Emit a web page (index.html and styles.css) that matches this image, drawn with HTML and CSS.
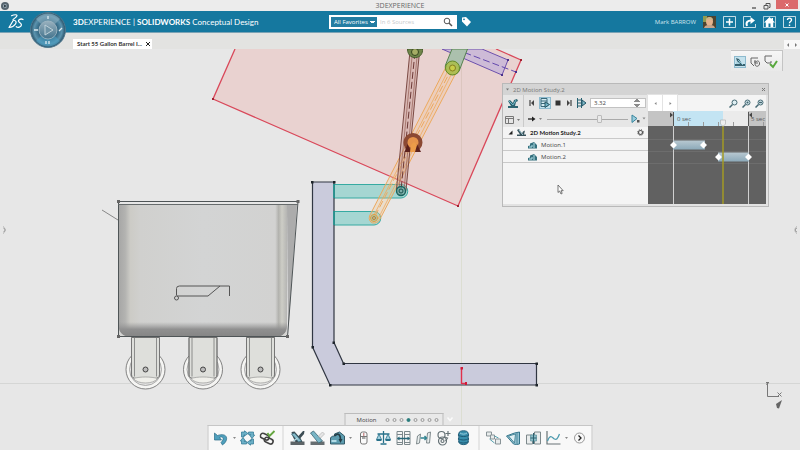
FILE: index.html
```html
<!DOCTYPE html>
<html lang="en">
<head>
    <meta charset="UTF-8">
    <meta name="viewport" content="width=device-width, initial-scale=1.0">
    <title>3DEXPERIENCE</title>
    <link rel="stylesheet" href="styles.css">
</head>
<body>
    <div class="titlebar">
        <svg class="app-icon" width="8" height="8" viewBox="0 0 8 8"><circle cx="4" cy="4" r="4" fill="#56646e"/><circle cx="4" cy="4" r="2" fill="#9fb0ba"/><path d="M3 2.5l3 1.5-3 1.5z" fill="#33414b"/></svg>
        <span class="window-title">3DEXPERIENCE</span>
        <div class="window-buttons">
            <button aria-label="Minimize"><svg width="8" height="8" viewBox="0 0 8 8"><path d="M2 6h4" stroke="#444" stroke-width="1.2"/></svg></button>
            <button aria-label="Restore"><svg width="8" height="8" viewBox="0 0 8 8"><path d="M3 3V1.500h4v4H6M1 3.500h4v3.500H1z" fill="none" stroke="#555"/></svg></button>
            <button class="close" aria-label="Close"><svg width="8" height="8" viewBox="0 0 8 8"><path d="M2.500 2.500l3 3m0-3l-3 3" stroke="#fff"/></svg></button>
        </div>
    </div>

    <header class="header">
        <svg class="ds-logo" width="16" height="17" viewBox="0 0 16 17" fill="none" stroke="#fff" stroke-linecap="round" stroke-linejoin="round">
            <path d="M3.500 2.800C6 1.500 9.500 1.200 9 2.800 8.500 4.200 6.500 5.500 5 6.500" stroke-width="1.100"/>
            <path d="M1 14.500L5.500 7C8 7.500 8.800 9 7.500 11 6 13.200 3.500 14.300 1 14.500z" stroke-width="1.200"/>
            <path d="M15 6.500C12.800 5.300 10 6.600 10.500 8.300 11 9.800 13.700 10 13.400 12 13 14.200 10 15 8.300 13.700" stroke-width="1.300"/>
        </svg>
        <button class="compass" aria-label="Compass">
            <svg width="36" height="36" viewBox="0 0 36 36">
                <defs>
                    <radialGradient id="rim"><stop offset=".5" stop-color="#2c5f7b"/><stop offset=".8" stop-color="#5b93ae"/><stop offset="1" stop-color="#274f66"/></radialGradient>
                    <linearGradient id="hub" x2="0" y2="1"><stop offset="0" stop-color="#9ab1be"/><stop offset="1" stop-color="#42738d"/></linearGradient>
                </defs>
                <circle cx="18" cy="18" r="17.500" fill="url(#rim)" stroke="#50798f"/>
                <path d="M6 7a16 16 0 0 1 24 0l-5 5a10 10 0 0 0-14 0z" fill="#8dafc0" opacity=".6"/>
                <path d="M6 29a16 16 0 0 0 24 0l-5-5a10 10 0 0 1-14 0z" fill="#4da2c6" opacity=".55"/>
                <circle cx="18" cy="18" r="9" fill="url(#hub)" stroke="#a6bdc8" stroke-width=".8"/>
                <path d="M15 13l8 5-8 5z" fill="#6e93a6" stroke="#bfd1d9"/>
                <path d="M4 18h4M29 19l3-3M18 4v3M16 29v3m3-3v3" stroke="#dceaf0" stroke-width="1.300"/>
            </svg>
        </button>
        <h1 class="brand"><b>3D</b>EXPERIENCE | <b>SOLIDWORKS</b> <span>Conceptual Design</span></h1>

        <form class="search">
            <select aria-label="Search scope"><option>All Favorites</option></select>
            <input type="text" aria-label="Search" placeholder="In 6 Sources">
            <button type="button" aria-label="Search"><svg width="10" height="10" viewBox="0 0 10 10" fill="none" stroke="#555"><circle cx="4" cy="4" r="2.800"/><path d="M6 6l3 3" stroke-width="1.500"/></svg></button>
        </form>
        <button class="tag" aria-label="Tags"><svg width="11" height="11" viewBox="0 0 11 11"><path d="M1 1.500L5 1l5 5-4 4.500-5-5z" fill="#fff"/><circle cx="3" cy="3.300" r=".9" fill="#16799f"/></svg></button>

        <div class="user">
            <span>Mark BARROW</span>
            <svg class="avatar" width="13" height="12" viewBox="0 0 13 12"><path fill="#4d4430" d="M0 0h13v12H0z"/><path fill="#8f9b51" d="M0 0h4v6H0z"/><ellipse cx="6.500" cy="5.500" rx="3.500" ry="4.200" fill="#e3b38e"/><path d="M3 4c0-4 7-4 7 0-2-1-5-1-7 0z" fill="#c9b585"/><path d="M1 12c1-3 3-3 5.500-3s4.500 0 5.500 3z" fill="#c9a58c"/></svg>
            <button aria-label="Add"><svg width="13" height="12" viewBox="0 0 13 12" fill="none" stroke="#fff"><path d="M.5.5h12v11H.5z" opacity=".75"/><path d="M6.500 2.500v7M3 6h7" stroke-width="1.500"/></svg></button>
            <button aria-label="Share"><svg width="13" height="12" viewBox="0 0 13 12" fill="none" stroke="#fff"><path d="M8 .5H.5v11h12V8" opacity=".75"/><path d="M4 10C2.500 6 5 4.500 8 4.500" stroke-width="2"/><path d="M7.500 1l4.500 3.500-4.500 3.500z" fill="#fff" stroke="none"/></svg></button>
            <button aria-label="Home"><svg width="13" height="12" viewBox="0 0 13 12"><path d="M.5.5h12v11H.5z" fill="none" stroke="#fff" opacity=".65"/><path d="M6.500 1L1 6.500h1.800V11h2.700V7.500h2V11h2.700V6.500H12L10 4.500V2H8.500v1z" fill="#fff"/></svg></button>
            <button aria-label="Help"><svg width="13" height="12" viewBox="0 0 13 12" fill="none" stroke="#fff"><path d="M.5.5h12v11H.5z" opacity=".75"/><path d="M4.500 4c0-2.500 4-2.500 4 0 0 1.500-2 1.500-2 3.200M6.500 8.500V10" stroke-width="1.400"/></svg></button>
        </div>
    </header>

    <nav class="tabs">
        <div class="tab">
            <span>Start 55 Gallon Barrel I...</span>
            <button aria-label="Close tab"><svg width="6" height="6" viewBox="0 0 6 6"><path d="M1 1l4 4m0-4L1 5" stroke="#222"/></svg></button>
        </div>
        <div class="tab-scroll">
            <button aria-label="Previous tab"><svg width="6" height="6" viewBox="0 0 6 6"><path d="M4 1L2 3l2 2z" fill="#777"/></svg></button>
            <button aria-label="Next tab"><svg width="6" height="6" viewBox="0 0 6 6"><path d="M2 1l2 2-2 2z" fill="#777"/></svg></button>
        </div>
    </nav>

    <main class="stage">
        <svg class="drawing" viewBox="0 49 800 401" preserveAspectRatio="xMidYMin slice">
            <defs>
                <linearGradient id="cart"><stop offset="0" stop-color="#a6a6a5"/><stop offset=".04" stop-color="#b3b3b1"/><stop offset=".07" stop-color="#cccbc6"/><stop offset=".13" stop-color="#d0d0ce"/><stop offset=".5" stop-color="#d3d4d4"/><stop offset=".93" stop-color="#d2d2d1"/><stop offset=".95" stop-color="#b2b2ae"/><stop offset=".97" stop-color="#cdcdc6"/><stop offset="1" stop-color="#b5b5b3"/></linearGradient>
                <linearGradient id="cartFloor" x2="0" y2="1"><stop offset="0" stop-color="#999" stop-opacity="0"/><stop offset=".5" stop-color="#909090"/><stop offset="1" stop-color="#858585"/></linearGradient>
                <g id="caster">
                    <circle r="19.500" fill="#f5f5f3" stroke="#666" stroke-width=".8"/>
                    <circle r="16" fill="#e4e4e3" stroke="#999" stroke-width=".8"/>
                    <path d="M-14-32V5c0 3 2 4 5 4H9c3 0 5-1 5-4v-37z" fill="#dedfdb" stroke="#555" stroke-width=".8"/>
                    <path d="M-14-32v39M-11-32v39M11-32v39M14-32v39" stroke="#777" stroke-width=".8"/>
                    <path d="M-12 9c6-2 18-2 24 0-4 6-20 6-24 0z" fill="#f0f0eb" stroke="#888" stroke-width=".6"/>
                    <circle r="2.500" fill="#bbb" stroke="#444"/>
                </g>
            </defs>

            <!-- ground and centre lines -->
            <path d="M0 383.500h800" stroke="#d5d6d5"/>
            <path d="M461.500 49v401" stroke="#dcded2"/>

            <!-- cart -->
            <path d="M102 210l16 10" stroke="#888"/>
            <path d="M287 205h10l-9 130" fill="#acacac"/>
            <path d="M118.500 204H287v132.500H118.500z" fill="url(#cart)"/>
            <path d="M119 322h168v9l-6 5.500H125l-6-5.500z" fill="url(#cartFloor)"/>
            <path d="M118.500 326v10.500H129c-6 0-10-4-10.500-10.500zM287 326v10.500h-8c5-1 8-5 8-10.500z" fill="#d5d5d3"/>
            <path d="M118.500 201.500H298l-10.500 135h-169z" fill="none" stroke="#4f5557"/>
            <path d="M118 204.500h180" stroke="#666b6c"/>
            <path d="M117 200h3v3h-3zM296.500 200h3v3h-3zM117 335h3v3h-3zM286 335h3v3h-3z" fill="#666"/>
            <g fill="none" stroke="#555">
                <path d="M176.500 295.500v-7q0-2.500 3-2.500h50v10M177 296h31l12-10"/>
                <circle cx="176.500" cy="298" r="2"/>
            </g>
            <use href="#caster" x="145.500" y="369.500"/>
            <use href="#caster" x="203" y="369.500"/>
            <use href="#caster" x="260.500" y="369.500"/>

            <!-- barrel -->
            <path d="M235 49l-22 50 245 107 63-146-25-11z" fill="#e9d2d0"/>
            <path d="M461.500 49v150" stroke="#dcc6bf"/>
            <path d="M235 49l-22 50 245 107 63-146-25-11" fill="none" stroke="#d9485a" stroke-width="1.300"/>
            <path d="M212 98h2v2h-2zM457 205h2v2h-2zM520 59h2v2h-2z" fill="#a02030"/>

            <!-- lift arm mounts -->
            <g fill="#a5d6d2" stroke="#36aaa2">
                <path d="M334 184.500h67a6.500 6.500 0 0 1 0 13.500h-67z"/>
                <path d="M334 211.500h40a6.500 6.500 0 0 1 0 13.500h-40z"/>
            </g>
            <!-- frame -->
            <path d="M312.500 182H334v160.500l9.500 21h193V385H330l-17.500-38z" fill="#cacbdc" stroke="#303642" stroke-width="1.200"/>
            <g fill="#1e252b"><path d="M311 181h2.500v2.500H311zM333 181h2.500v2.500H333zM332.500 341.500H335v2.500h-2.500zM342.500 362.500h2.500v2.500h-2.500zM535.500 362.500h2.500v2.500h-2.500zM535.500 384h2.500v2.500h-2.500zM329 384h2.500v2.500H329zM311.500 346h2.500v2.500h-2.500z"/></g>
            <path d="M334 184v14M334 211v14" stroke="#1f9d97" stroke-width="1.500"/>

            <!-- top bracket -->
            <path d="M442 49l60 26 6-15-26-11z" fill="#cdbbd7" stroke="#6c50ad"/>
            <path d="M455 49l61 23" fill="none" stroke="#6348ad" stroke-dasharray="7 3"/>
            <path d="M501 74h2v2h-2zM507 59h2v2h-2zM515 71h2v2h-2z" fill="#49318c"/>
            <path d="M452 49l-6.500 16c-2 10 11 13 14 5L467.500 49z" fill="#abc0ad" stroke="#55834d"/>
            <!-- orange arm -->
            <g fill="none" stroke="#eda95e">
                <path d="M446.500 66l-77 150c-2 8 7 9 10 4l78-150" fill="#f4c58a" fill-opacity=".28"/>
                <path d="M450 67l-77 150M454 69l-76 150" stroke-width=".8"/>
                <path d="M452 68l-78 150" stroke-dasharray="7 3"/>
            </g>
            <circle cx="452.500" cy="68" r="7" fill="#a9bd48" fill-opacity=".85" stroke="#638a28"/>
            <circle cx="452.500" cy="68" r="3" fill="#c8cd46" stroke="#857f22"/>
            <circle cx="374" cy="218" r="3.500" fill="#a2ccab" stroke="#ea9a38"/>
            <circle cx="374" cy="218" r="1.500" fill="none" stroke="#c6772f"/>
            <!-- brown arm -->
            <path d="M410 51l-13.500 138c0 8 9 8 9.500 1L419.500 52z" fill="#bd8980" fill-opacity=".35" stroke="#7b4a44"/>
            <path d="M412.500 52L399 190M417.500 52L404 190" stroke="#935e55" stroke-width=".7"/>
            <path d="M415 52l-14 138" stroke="#6d3936" stroke-dasharray="7 3"/>
            <path d="M407.500 49h15c1 11-15 12-15 0z" fill="#71864a" stroke="#465c2c"/>
            <circle cx="415" cy="52" r="3.500" fill="#a5ad65" stroke="#34451e"/>
            <circle cx="401" cy="191" r="4.500" fill="#5ba8a3" fill-opacity=".6" stroke="#16655f" stroke-width="1.300"/>
            <circle cx="401" cy="191" r="2" fill="none" stroke="#18504c"/>
            <!-- motor -->
            <circle cx="413" cy="142.500" r="7.500" fill="#e6944b" stroke="#8b4933" stroke-width="4"/>
            <path d="M404.500 152l3-8 4 8zM414 152l3-8 4 8z" fill="#5c211c"/>
            <path d="M410 152l1-7 3-3 3 3-2 7z" fill="#ec9c49"/>

            <!-- origin -->
            <path d="M461.500 384v-15.500M461.500 383.500h5" stroke="#e0314b" stroke-width="1.400"/>
            <path d="M460.500 367h2.500v2.500h-2.500zM465 382h2v3h-2z" fill="#d11a38"/>

            <!-- view axes -->
            <g fill="none" stroke="#777">
                <path d="M767.500 384v12.500H779M766 382.500h3l-3 2M777.500 392.500l4 4m0-4l-4 4"/>
            </g>
            <path d="M782 400l-6 4 1 4 2 .5z" fill="#666"/>

            <g fill="none" stroke="#999" stroke-width=".8">
                <path d="M3 226.500a4 4 0 0 1 0 7M3.500 228l2 2-2 2M797 226.500a4 4 0 0 0 0 7M797 228l-2 2 2 2"/>
            </g>
        </svg>

        <div class="sketch-tools">
            <button class="selected" aria-label="Motion"><svg width="12" height="12" viewBox="0 0 12 12"><path d="M1 10h10V8H8L5 3 2 2l1 3 3 3H1z" fill="#37616f"/><path d="M4 4l5 5M2 7h4" stroke="#8ec4d4"/></svg></button>
            <button aria-label="Update sketch"><svg width="12" height="12" viewBox="0 0 12 12" fill="none" stroke="#666"><path d="M2 2h7M2 2v5l3 3M6 5v3c0 3 4 3 4.500 0S8 4 7 6M6 4v3h3"/></svg></button>
            <button aria-label="Accept"><svg width="14" height="14" viewBox="0 0 14 14" fill="none"><path d="M8 1H1v5l2 2h4V6" stroke="#666"/><path d="M6 9l3 3 4-6" stroke="#58a83d" stroke-width="2"/></svg></button>
        </div>

        <section class="panel">
            <div class="panel-title">
                <svg width="5" height="5" viewBox="0 0 5 5"><path d="M1 1.500h3l-1.500 2z" fill="#777"/></svg>
                <h2>2D Motion Study.2</h2>
                <button aria-label="Close panel"><svg width="5" height="5" viewBox="0 0 5 5"><path d="M1 1l3 3m0-3L1 4" stroke="#777"/></svg></button>
            </div>
            <div class="panel-body">
                <div class="study">
                    <div class="controls">
                        <div class="modes">
                            <button aria-label="Motion study"><svg width="12" height="12" viewBox="0 0 12 12"><path d="M1 10h10V8H8l1-4 2-1-1-2-3 1-1 3-3-3-2 1 3 5H1z" fill="#2c6471"/><path d="M2 3l4 4 3-5" fill="none" stroke="#71b6c6"/></svg></button>
                            <button class="drop" aria-label="Layout"><svg width="16" height="9" viewBox="0 0 16 9"><path d="M.5 1.500h8v7h-8zM.5 3.500h8M3.500 3.500v5" fill="none" stroke="#777"/><path d="M12 4h3l-1.500 2z" fill="#777"/></svg></button>
                        </div>
                        <div class="playback">
                            <div class="play-row">
                                <button aria-label="To start"><svg width="8" height="8" viewBox="0 0 8 8"><path d="M2 1v6" stroke="#222"/><path d="M6 1v6L3 4z" fill="#444"/></svg></button>
                                <button class="selected" aria-label="Simulate"><svg width="12" height="12" viewBox="0 0 12 12"><path d="M2 1.500h6v8H2zM2 4h6M2 6.500h4" fill="#d4eaf1" stroke="#39697a"/><path d="M6 5l4.500 2.500L6 10.500z" fill="#74b7cc" stroke="#285663"/></svg></button>
                                <button aria-label="Stop"><svg width="8" height="8" viewBox="0 0 8 8"><path d="M1.500 1.500h5v5h-5z" fill="#333"/></svg></button>
                                <button aria-label="To end"><svg width="8" height="8" viewBox="0 0 8 8"><path d="M6 1v6" stroke="#222"/><path d="M2 1v6l3-3z" fill="#444"/></svg></button>
                                <button aria-label="Step"><svg width="11" height="10" viewBox="0 0 11 10"><path d="M1.500 0v10M5.500 0v10M1 2h5M1 5h5M1 8h5" stroke="#286272"/><path d="M6 2l4 3-4 3z" fill="#7db9c8" stroke="#245566"/></svg></button>
                                <input type="number" aria-label="Time" value="3.32" step="0.01">
                            </div>
                            <div class="play-row">
                                <button class="drop" aria-label="Direction"><svg width="16" height="8" viewBox="0 0 16 8"><path d="M0 4h5" stroke="#222" stroke-width="1.300"/><path d="M4 1.500L7.500 4 4 6.500z" fill="#222"/><path d="M11 3h3l-1.500 2z" fill="#888"/></svg></button>
                                <input type="range" aria-label="Speed" min="0" max="100" value="66">
                                <button class="drop" aria-label="Play options"><svg width="15" height="10" viewBox="0 0 15 10"><path d="M1 1l5 3.500-5 4z" fill="#9dcddd" stroke="#36859d"/><path d="M6 6h2.500v2.500H6z" fill="#555"/><path d="M11.500 3.500h3L13 5.500z" fill="#888"/></svg></button>
                            </div>
                        </div>
                    </div>
                    <ul class="tree">
                        <li class="root">
                            <svg width="5" height="5" viewBox="0 0 5 5"><path d="M4.500.5v4h-4z" fill="#222"/></svg>
                            <svg width="9" height="9" viewBox="0 0 9 9"><path d="M0 8h9V6.500H7l1-4-2 1-1 2L2 1 0 2l3 4.500H0z" fill="#37525b"/><path d="M2 2l4 5" stroke="#a8ced8"/></svg>
                            <span>2D Motion Study.2</span>
                            <button aria-label="Study settings"><svg width="7" height="7" viewBox="0 0 7 7" fill="none" stroke="#555"><circle cx="3.500" cy="3.500" r="2" stroke-width="1.200"/><circle cx="3.500" cy="3.500" r="2.900" stroke-dasharray="1 1.300"/></svg></button>
                        </li>
                        <li><svg width="9" height="8" viewBox="0 0 9 8"><path d="M0 7.500h9V4L6 1 2 2.500v2L0 5z" fill="#35707e"/><path d="M1 6h3V4M6 2v5" stroke="#b3e0e8" fill="none"/></svg><span>Motion.1</span></li>
                        <li><svg width="9" height="8" viewBox="0 0 9 8"><path d="M0 7.500h9V4L6 1 2 2.500v2L0 5z" fill="#35707e"/><path d="M1 6h3V4M6 2v5" stroke="#b3e0e8" fill="none"/></svg><span>Motion.2</span></li>
                    </ul>
                </div>
                <div class="timeline">
                    <div class="timeline-tools">
                        <div class="steps">
                            <button aria-label="Previous key"><svg width="5" height="5" viewBox="0 0 5 5"><path d="M3.500 1v3L1.500 2.500z" fill="#888"/></svg></button>
                            <button aria-label="Next key"><svg width="5" height="5" viewBox="0 0 5 5"><path d="M1.500 1v3l2-1.500z" fill="#888"/></svg></button>
                        </div>
                        <button aria-label="Zoom fit"><svg width="9" height="9" viewBox="0 0 9 9" fill="none" stroke="#456873"><circle cx="5.500" cy="3.500" r="2.500" fill="#dfeff3"/><path d="M3.500 5.500l-3 3" stroke-width="1.500"/></svg></button>
                        <button aria-label="Zoom in"><svg width="9" height="9" viewBox="0 0 9 9" fill="none" stroke="#456873"><circle cx="5.500" cy="3.500" r="2.500" fill="#dfeff3"/><path d="M3.500 5.500l-3 3M4.500 3.500h2M5.500 2.500v2" stroke-width="1.500"/></svg></button>
                        <button aria-label="Zoom out"><svg width="9" height="9" viewBox="0 0 9 9" fill="none" stroke="#456873"><circle cx="5.500" cy="3.500" r="2.500" fill="#dfeff3"/><path d="M3.500 5.500l-3 3M4 3.500h3" stroke-width="1.500"/></svg></button>
                    </div>
                    <svg class="tracks" viewBox="0 0 118 93">
                        <defs><linearGradient id="bar" x2="0" y2="1"><stop offset="0" stop-color="#b8c8d1"/><stop offset="1" stop-color="#8ca9b9"/></linearGradient></defs>
                        <path fill="#c4c4c4" d="M0 0h118v16H0z"/>
                        <path fill="#c3e4f3" d="M25 0h50v16H25z"/>
                        <path fill="#ebebeb" d="M75 0h25v16H75z"/>
                        <path fill="#616161" d="M0 15h118v78H0z"/>
                        <path d="M0 28.500h118M0 40.500h118M0 52.500h118" stroke="#6d6d6d"/>
                        <path d="M40.500 11v4M55.500 11v4M70.500 11v4M85.500 11v4M115.500 11v4" stroke="#999"/>
                        <path d="M25.500 1v14M100.500 1v14" stroke="#555"/>
                        <path d="M22 1.500v5l3-2.500zM104 1.500v5l-3-2.500z" fill="#444"/>
                        <text class="tick-label" x="29" y="10">0 sec</text>
                        <text class="tick-label" x="103" y="10">5 sec</text>
                        <path d="M25.500 15v78M100.500 15v78" stroke="#d0d0d0"/>
                        <rect x="25" y="29.500" width="32" height="9" fill="url(#bar)"/>
                        <rect x="70" y="41.500" width="31" height="9" fill="url(#bar)"/>
                        <path d="M75 14v79" stroke="#a39a24" stroke-width="1.500"/>
                        <path d="M72.500 9h5v4L75 15.500 72.500 13z" fill="#eee" stroke="#aaa" stroke-width=".6"/>
                        <path d="M25.500 30.500l3.500 3.500-3.500 3.500L22 34zM55.500 30.500L59 34l-3.500 3.500L52 34zM70.500 42.500L74 46l-3.500 3.500L67 46zM100.500 42.500L104 46l-3.500 3.500L97 46z" fill="#fff"/>
                    </svg>
                </div>
            </div>
        </section>

        <svg class="cursor" width="7" height="11" viewBox="0 0 7 11"><path d="M1 1v7.500l1.600-1.500 1.400 3 1.200-.6L4 6.700h2.200z" fill="#fff" stroke="#555" stroke-width=".8"/></svg>

        <div class="dock">
            <div class="dock-head">
                <div class="dock-tab">
                    <span>Motion</span>
                    <div class="dots"><i></i><i></i><i></i><i class="on"></i><i></i><i></i><i></i><i></i></div>
                </div>
                <svg width="9" height="8" viewBox="0 0 9 8"><path d="M2 2.500l2.500 3L7 2.500" fill="none" stroke="#fafafa" stroke-width="1.500"/></svg>
            </div>
            <div class="dock-bar">
                <button aria-label="Undo"><svg viewBox="0 0 16 16"><path d="M1 3v7h7L6 7.500c4-2 5 2 1.500 5L9 15c7-5 5-13-5-9.500z" fill="#4fa0bd" stroke="#2a6b86" stroke-width=".7"/></svg></button>
                <button class="more" aria-label="Undo history"><svg viewBox="0 0 4 4"><path d="M.5 1h3L2 3z" fill="#888"/></svg></button>
                <button aria-label="Update"><svg viewBox="0 0 16 16" fill="#6bb0c7" stroke="#2d7490" stroke-width=".7"><path d="M2 7V2h3V.8L8.500 3.500 5 6V4.800H4.500V7zM9 2h5v3h1.200l-2.700 3.500L10 5h1.200v-.5H9zM14 9v5h-3v1.200L7.500 12.500 11 10v1.200h.5V9zM7 14H2v-3H.8l2.700-3.500L6 11H4.800v.5H7z"/></svg></button>
                <button aria-label="Link"><svg viewBox="0 0 16 16" fill="none" stroke="#444" stroke-width="1.600"><rect x="1" y="4" width="9" height="5" rx="2.500" transform="rotate(25 5 6)"/><rect x="5" y="8" width="9" height="5" rx="2.500" transform="rotate(25 9 10)"/><path d="M8 3l2 3 5-5" stroke="#65a640" stroke-width="1.800"/></svg></button>
                <span class="sep"></span>
                <button aria-label="Mechanism"><svg viewBox="0 0 16 16"><path d="M1 11.500h14V15H1z" fill="#5c6366"/><path d="M2 2l3-.5 4 4.500 4.500-5H15l-.5 3L11 8l2 4H6L3 6z" fill="#3c4c53"/><path d="M2 4l3-1 7 8-3 1z" fill="#86bccb" stroke="#39606e" stroke-width=".7"/><path d="M4 11l4-3" stroke="#b7d9e2" stroke-width="1.500"/></svg></button>
                <button aria-label="Driver"><svg viewBox="0 0 16 16"><path d="M1 11.500h14V15H1z" fill="#666d70"/><path d="M1 3l3-2 9 10-4 2z" fill="#79b5c6" stroke="#3c6775" stroke-width=".8"/><path d="M9 6l4-4 2 2-4 4z" fill="#e5e5e5" stroke="#bbb" stroke-width=".8"/></svg></button>
                <button aria-label="Motion"><svg viewBox="0 0 16 16"><path d="M1 8c1-2 3-2 4-2V4l5-2 5 4v8H1z" fill="#5c9caf" stroke="#345a68"/><path d="M5 6c4-4 6-1 6 4" fill="none" stroke="#243c45" stroke-width="1.600"/><path d="M9 9l2 4 2-4z" fill="#243c45"/><path d="M2 11h5" stroke="#b2dce7" stroke-width="2"/></svg></button>
                <button class="more" aria-label="More motions"><svg viewBox="0 0 4 4"><path d="M.5 1h3L2 3z" fill="#888"/></svg></button>
                <button aria-label="Mouse"><svg viewBox="0 0 16 16" fill="#fafafa" stroke="#777"><rect x="5" y="2" width="6.500" height="12" rx="2"/><path d="M5 6.500h6.500"/><path d="M6.500 8h3.500" stroke="#555"/><path d="M8.300 3v3" stroke="#b66"/></svg></button>
                <button aria-label="Balance"><svg viewBox="0 0 16 16" fill="none" stroke="#28718a" stroke-width="1.300"><path d="M8 1v12M2 4h12M5 14h6"/><path d="M3.500 4L1 9.500h5zM12.500 4L10 9.500h5z" fill="#a5d1df" stroke-width=".8"/><path d="M1 10h5M10 10h5" stroke-width="2"/></svg></button>
                <button aria-label="Distance"><svg viewBox="0 0 16 16" fill="#f6f6f6" stroke="#7c888c"><path d="M1.500 1.500h5.500v13H1.500zM9 1.500h5.500v13H9zM1.500 4.500H7M9 4.500h5.500M1.500 12.500H7M9 12.500h5.500"/><path d="M2 8.500h12" stroke="#286779" stroke-width="1.300"/><path d="M4 6.500v4L1.500 8.500zM12 6.500v4l2.500-2z" fill="#286779" stroke="none"/></svg></button>
                <button aria-label="Spring"><svg viewBox="0 0 16 16" fill="#e8eeee" stroke="#7f898c"><path d="M1 14l1-8 3-2-1 9zM11 13l1-10 3-1-1 11z"/><path d="M5 8h6M9 6l2 2-2 2" stroke="#318491" fill="none" stroke-width="1.400"/></svg></button>
                <button aria-label="Belt"><svg viewBox="0 0 16 16" fill="none" stroke="#677377" stroke-width="1.200"><circle cx="6" cy="5" r="3.500"/><circle cx="7" cy="11" r="4"/><circle cx="7" cy="11" r="1.500"/><path d="M9 7l3 1-2 3M12.500 1v5M10 3.500h5"/></svg></button>
                <button aria-label="Barrel"><svg viewBox="0 0 16 16"><path d="M3.500 3c0-3 9-3 9 0l.7 2-.7 2 .7 2-.7 2 .3 1c-1 3.500-8.600 3.500-9.600 0l.3-1-.7-2 .7-2-.7-2z" fill="#398eac" stroke="#28617b"/><path d="M3 5c2 2 8 2 10 0M3 8.500c2 2 8 2 10 0M3 11.500c2 2 8 2 10 0" fill="none" stroke="#1d5974"/><path d="M4.500 3c2 1.500 5 1.500 7 0" stroke="#9acddd" fill="none"/></svg></button>
                <span class="sep"></span>
                <button aria-label="Pattern"><svg viewBox="0 0 16 16" fill="#e8ecec" stroke="#899397"><path d="M1 2h5v4H1zM10 9h5v5h-5z"/><path d="M5 5h4v4H5z"/><path d="M4 9l5 4M9 6l4 2" stroke="#57a2b0"/></svg></button>
                <button aria-label="Section"><svg viewBox="0 0 16 16"><path d="M1 6l8-3 5-1v12l-3 .5L8 14z" fill="#95c3d3" stroke="#33748a"/><path d="M3 6l7-2-1 9zM11.500 3v11" fill="#e1f0f4" stroke="#4d899b"/></svg></button>
                <button aria-label="Interference"><svg viewBox="0 0 16 16"><path d="M1 5h6v9H1zM9 2h6v12H9z" fill="#eaeded" stroke="#7d888b"/><path d="M5 5h6v6H5z" fill="#8dbcc7" stroke="#5b929e" stroke-width=".7"/><path d="M8 3v11M5 8h6" stroke="#2d6270"/></svg></button>
                <button aria-label="Plot"><svg viewBox="0 0 16 16" fill="none"><path d="M1.500 1v13H15" stroke="#687376" stroke-width="1.200"/><path d="M2 11c3-8 5-3 7-2s3 0 5-5" stroke="#4d9baf" stroke-width="1.300"/></svg></button>
                <button class="more" aria-label="More plots"><svg viewBox="0 0 4 4"><path d="M.5 1h3L2 3z" fill="#888"/></svg></button>
                <button aria-label="Next commands"><svg viewBox="0 0 16 16" fill="none"><circle cx="8" cy="8" r="5" stroke="#999"/><path d="M7 5.500L9.500 8 7 10.500" stroke="#222" stroke-width="1.300"/></svg></button>
            </div>
        </div>
    </main>
</body>
</html>
```
FILE: styles.css
```css
* {
    box-sizing: border-box;
}
body {
    margin: 0;
    height: 100vh;
    display: flex;
    flex-direction: column;
    overflow: hidden;
    background: #e7e7e7;
    color: #444;
    font: 6px/8px "Open Sans", "Noto Sans", sans-serif;
}
button {
    display: flex;
    align-items: center;
    justify-content: center;
    flex-shrink: 0;
    padding: 0;
    border: 0;
    background: none;
    cursor: pointer;
}
input, select {
    min-width: 0;
    margin: 0;
    padding: 0;
    border: 0;
    font: inherit;
    color: inherit;
}
svg {
    display: block;
    flex-shrink: 0;
}
h1, h2 {
    margin: 0;
    font-weight: normal;
}

/* window title */
.titlebar {
    display: grid;
    grid-template-columns: 1fr auto 1fr;
    align-items: center;
    height: 11px;
    background: #ececec;
}
.app-icon {
    margin-left: 1px;
}
.window-title {
    font-size: 7px;
    line-height: 10px;
    color: #666;
}
.window-buttons {
    display: flex;
    justify-content: flex-end;
    gap: 5px;
    height: 100%;
    padding-right: 2px;
}
.window-buttons .close {
    width: 22px;
    height: 9px;
    background: #db6a6c;
}

/* blue header */
.header {
    position: relative;
    display: flex;
    align-items: center;
    flex-shrink: 0;
    height: 22px;
    padding: 0 4px 0 8px;
    background: #15789f;
    border-bottom: 1px solid #7ba3b5;
    color: #fff;
}
.compass {
    position: absolute;
    left: 30px;
    top: 1px;
    z-index: 2;
}
.brand {
    width: 256px;
    padding-left: 49px;
    font-family: Lato, sans-serif;
    font-size: 8px;
    line-height: 12px;
    white-space: nowrap;
}
.search {
    display: flex;
    align-items: center;
    width: 128px;
    height: 14px;
    margin-left: 49px;
    padding: 2px;
    background: #fff;
}
.search select {
    appearance: none;
    width: 46px;
    height: 10px;
    padding-left: 3px;
    border-radius: 0;
    background: linear-gradient(to bottom left, #fff 50%, transparent 50%) right 5px top 4px / 3px 3px no-repeat,
        linear-gradient(to bottom right, #fff 50%, transparent 50%) right 2px top 4px / 3px 3px no-repeat #247da2;
    color: #fff;
}
.search input {
    flex: 1;
    padding-left: 3px;
    background: none;
    color: #444;
}
.search input::placeholder {
    color: #c5c9cb;
}
.search button {
    width: 14px;
}
.tag {
    margin-left: 4px;
}
.user {
    display: flex;
    align-items: center;
    gap: 7px;
    margin-left: auto;
}
.user span {
    color: #cfe4ed;
}

/* document tabs */
.tabs {
    display: flex;
    align-items: flex-end;
    justify-content: space-between;
    height: 16px;
    padding-left: 73px;
    background: #e3e3e1;
}
.tab {
    display: flex;
    align-items: center;
    justify-content: space-between;
    width: 79px;
    height: 10px;
    padding: 0 1px 0 4px;
    background: #fff;
    color: #333;
    font-family: Lato, sans-serif;
    font-weight: bold;
}
.tab-scroll {
    display: flex;
    gap: 2px;
    height: 9px;
    padding: 0 1px;
    background: #f8f8f8;
}

/* sketch area */
.stage {
    position: relative;
    flex: 1;
    min-height: 0;
}
.drawing {
    width: 100%;
    height: 100%;
}
.sketch-tools {
    position: absolute;
    top: 1px;
    right: 17px;
    display: flex;
    align-items: center;
    gap: 3px;
    height: 21px;
    padding: 2px 4px 0 3px;
    border-top: 1px solid #c4c4c4;
    border-right: 1px solid #c4c4c4;
    background: linear-gradient(#f6f6f6, #e9e9e9);
}
.selected {
    background: #c5e2ed;
    outline: 1px solid #8dbace;
    outline-offset: -1px;
}

/* motion study window */
.panel {
    position: absolute;
    top: 34px;
    right: 31px;
    width: 267px;
    border: 1px solid #b9b9b9;
    background: #e2e2e2;
}
.panel-title {
    display: flex;
    align-items: center;
    gap: 3px;
    height: 11px;
    padding: 0 2px;
    background: #d4d4d4;
    color: #777;
}
.panel-title h2 {
    flex: 1;
    font-size: 6px;
}
.panel-body {
    display: flex;
    padding: 0 2px 2px 0;
}
.study {
    flex: 1;
    min-width: 0;
    display: flex;
    flex-direction: column;
}
.controls {
    display: flex;
    height: 32px;
    background: #e6e6e6;
}
.modes {
    display: flex;
    flex-direction: column;
    justify-content: space-around;
    align-items: center;
    width: 21px;
    border-right: 1px solid #cacaca;
}
.playback {
    flex: 1;
    min-width: 0;
    display: flex;
    flex-direction: column;
}
.play-row {
    display: flex;
    align-items: center;
    gap: 3px;
    height: 16px;
    padding: 0 2px 0 4px;
}
.play-row input[type=number] {
    flex: 1;
    width: 0;
    height: 10px;
    padding-left: 3px;
    border: 1px solid #c2c2c2;
    background: #fff;
}
input[type=number]::-webkit-inner-spin-button {
    height: 8px;
    width: 7px;
    opacity: 1;
}
input[type=range] {
    appearance: none;
    flex: 1;
    width: 0;
    height: 10px;
    background: linear-gradient(#aaa, #aaa) center / 100% 1px no-repeat;
}
input[type=range]::-webkit-slider-thumb {
    appearance: none;
    width: 5px;
    height: 8px;
    border: 1px solid #bbb;
    border-radius: 1px;
    background: #e9e9e9;
}
.tree {
    flex: 1;
    margin: 0;
    padding: 0;
    list-style: none;
    background: #f4f4f4;
}
.tree li {
    display: flex;
    align-items: center;
    gap: 4px;
    height: 12px;
    padding: 0 4px 0 25px;
    border-bottom: 1px solid #c9c9c9;
}
.tree .root {
    padding-left: 5px;
    color: #222;
    font-family: Lato, sans-serif;
    font-weight: bold;
}
.root button {
    margin-left: auto;
}
.timeline {
    flex: 0 0 118px;
}
.timeline-tools {
    display: flex;
    align-items: center;
    justify-content: flex-end;
    gap: 4px;
    height: 16px;
    padding-right: 2px;
    background: #f4f4f4;
}
.steps {
    display: flex;
    gap: 1px;
    height: 100%;
    margin-right: auto;
}
.steps button {
    width: 14px;
    background: #fff;
    outline: 1px solid #e3e3e3;
}
.tracks {
    width: 100%;
}
.tick-label {
    font-size: 6px;
    fill: #555;
}
.cursor {
    position: absolute;
    left: 557px;
    top: 135px;
}

/* command dock */
.dock {
    position: absolute;
    bottom: 0;
    left: 50%;
    transform: translateX(-50%);
}
.dock-head {
    display: flex;
    align-items: center;
    gap: 2px;
    padding-left: 137px;
}
.dock-tab {
    display: flex;
    align-items: center;
    justify-content: space-between;
    width: 99px;
    height: 12px;
    padding: 0 4px 0 11px;
    border: 1px solid #bcbcbc;
    border-bottom: 0;
    background: #e9e9e9;
}
.dots {
    display: flex;
    gap: 3px;
}
.dots i {
    width: 4px;
    height: 4px;
    border: 1px solid #999;
    border-radius: 50%;
}
.dots .on {
    border-color: #287c7c;
    background: #287c7c;
}
.dock-bar {
    display: flex;
    align-items: center;
    height: 25px;
    padding: 0 2px 0 3px;
    border: 1px solid #c6c6c6;
    border-bottom: 0;
    background: #f8f8f8;
}
.dock-bar button {
    width: 20px;
    height: 24px;
}
.dock-bar svg {
    width: 16px;
    height: 16px;
}
.dock-bar .more {
    width: 6px;
}
.dock-bar .more svg {
    width: 4px;
    height: 4px;
}
.sep {
    width: 1px;
    height: 24px;
    margin: 0 4px 0 5px;
    background: #d3d3d3;
}
```
